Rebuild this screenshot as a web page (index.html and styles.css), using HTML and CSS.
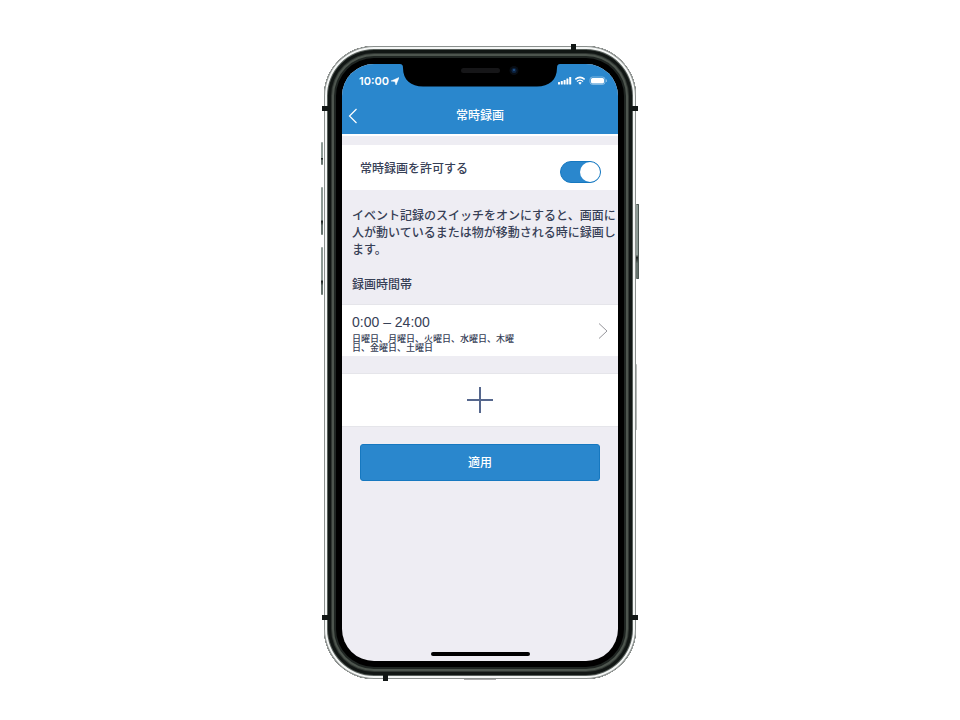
FILE: index.html
```html
<!doctype html>
<html lang="ja">
  <head>
    <meta charset="UTF-8" />
    <meta name="viewport" content="width=device-width, initial-scale=1.0" />
    <title>常時録画</title>
    <link rel="stylesheet" href="styles.css">
  </head>
  <body>
    <div class="phone">
      <i class="antenna antenna-top"></i>
      <i class="antenna antenna-bottom"></i>
      <i class="antenna antenna-left upper"></i>
      <i class="antenna antenna-left lower"></i>
      <i class="antenna antenna-right upper"></i>
      <i class="antenna antenna-right lower"></i>
      <i class="key key-mute"></i>
      <i class="key key-volume-up"></i>
      <i class="key key-volume-down"></i>
      <i class="key key-power"></i>
      <i class="key key-sim"></i>
      <i class="port"></i>

      <div class="screen">
        <svg class="notch" viewBox="0 0 160 23" aria-hidden="true">
          <path d="M0 0H160C158 0 157 1 157 4C157 16 149 22.500 137 22.500H23C11 22.500 3 16 3 4C3 1 2 0 0 0Z" fill="#000" />
          <rect x="61" y="4" width="39" height="5" rx="2.500" fill="#161618" />
          <circle cx="114" cy="6.500" r="4.500" fill="#080d14" />
          <circle cx="114" cy="6.500" r="2.500" fill="#0c2444" />
          <circle cx="114" cy="6" r="1" fill="#24558b" />
        </svg>

        <header class="header">
          <div class="status">
            <span class="clock">
              10:00
              <svg width="8" height="8" viewBox="0 0 8 8" aria-hidden="true">
                <path d="M8 .5L5 8L4 4.500L0 4Z" fill="#fff" stroke="#fff" stroke-width=".5" />
              </svg>
            </span>
            <svg width="49" height="9" viewBox="0 0 49 9" aria-hidden="true">
              <g fill="#fff">
                <rect x="0" y="6" width="2" height="2.500" rx=".5" />
                <rect x="2.800" y="5" width="2" height="3.500" rx=".5" />
                <rect x="5.600" y="4" width="2" height="4.500" rx=".5" />
                <rect x="8.400" y="2.500" width="2" height="6" rx=".5" />
                <rect x="11.200" y="1" width="2" height="7.500" rx=".5" />
                <path d="M20.300 6.800Q22 5.400 23.700 6.800L22 8.800Z" />
                <rect x="33" y="2" width="13" height="5.500" rx="1.500" />
              </g>
              <g fill="none" stroke="#fff">
                <path d="M17.300 3.400Q22-.6 26.700 3.400" stroke-width="1.500" />
                <path d="M18.900 5.500Q22 2.700 25.100 5.500" stroke-width="1.300" />
                <rect x="32" y="1" width="15" height="7.500" rx="2.500" opacity=".4" />
                <path d="M48.500 3.500V6" opacity=".4" />
              </g>
            </svg>
          </div>
          <nav class="navbar">
            <button class="back" type="button" aria-label="戻る">
              <svg width="10" height="16" viewBox="0 0 10 16" aria-hidden="true">
                <path d="M8.500 1L1.500 8L8.500 15" fill="none" stroke="#fff" stroke-width="1.200" />
              </svg>
            </button>
            <h1 class="title">常時録画</h1>
          </nav>
        </header>

        <main class="content">
          <div class="switch-row">
            <label for="always">常時録画を許可する</label>
            <input class="switch" id="always" type="checkbox" checked />
          </div>

          <p class="description">イベント記録のスイッチをオンにすると、画面に人が動いているまたは物が移動される時に録画します。</p>

          <h2 class="section-title">録画時間帯</h2>

          <button class="schedule" type="button">
            <span class="schedule-text">
              <span class="schedule-time">0:00 – 24:00</span>
              <span class="schedule-days">日曜日、月曜日、火曜日、水曜日、木曜<br />日、金曜日、土曜日</span>
            </span>
            <svg width="10" height="16" viewBox="0 0 10 16" aria-hidden="true">
              <path d="M1 .5L9 8L1 15.500" fill="none" stroke="#96969b" />
            </svg>
          </button>

          <button class="add" type="button" aria-label="追加">
            <svg width="26" height="26" viewBox="0 0 26 26" aria-hidden="true">
              <path d="M13 0V26M0 13H26" fill="none" stroke="#56678d" stroke-width="2" />
            </svg>
          </button>

          <button class="apply" type="button">適用</button>
        </main>

        <div class="home-bar"></div>
      </div>
    </div>
  </body>
</html>
```

FILE: styles.css
```css
* {
  box-sizing: border-box;
  padding: 0;
  margin: 0;
}

body {
  min-height: 100vh;
  padding: 46px 0 40px;
  background: #fff;
  color: #374056;
  font-family: Inter, "Noto Sans CJK JP", sans-serif;
  font-size: 12px;
  font-weight: 500;
}

button {
  border: 0;
  background: none;
  color: inherit;
  font: inherit;
  cursor: pointer;
}

svg {
  display: block;
  flex: none;
}

/* device */
.phone {
  position: relative;
  display: flex;
  width: 312px;
  max-width: 100%;
  min-height: 633px;
  margin: 0 auto;
  padding: 18px;
  border-radius: 50px;
  background: #000;
  box-shadow:
    inset 0 0 0 1px #8b908e,
    inset 0 0 0 3px #f4f6f5,
    inset 0 0 0 4px #59605c,
    inset 0 0 0 7px #111614,
    inset 0 0 0 8px #303632,
    inset 0 0 0 10px #4d554e,
    inset 0 0 0 12px #1f2522;
}

.antenna,
.key,
.port {
  position: absolute;
  background: #111615;
}

.antenna-top,
.antenna-bottom {
  width: 5px;
  height: 6px;
}

.antenna-top {
  top: -2px;
  right: 60px;
}

.antenna-bottom {
  bottom: -2px;
  left: 59px;
}

.antenna-left,
.antenna-right {
  width: 6px;
  height: 5px;
}

.antenna-left {
  left: -2px;
}

.antenna-right {
  right: -2px;
}

.upper {
  top: 60px;
}

.lower {
  bottom: 59px;
}

.key {
  left: -3px;
  width: 2px;
  border-radius: 1px;
  background: linear-gradient(#8d9a95 68%, #1b211f 72%, #65726d 80%);
}

.key-mute {
  top: 96px;
  height: 23px;
}

.key-volume-up {
  top: 141px;
  height: 48px;
}

.key-volume-down {
  top: 201px;
  height: 48px;
}

.key-power {
  top: 158px;
  right: -3px;
  left: auto;
  width: 3px;
  height: 75px;
  border: solid #4d5955;
  border-width: 1px 1px 1px 0;
}

.key-sim {
  top: 318px;
  right: -1px;
  left: auto;
  width: 1px;
  height: 66px;
  background: #b5b9b7;
}

.port {
  bottom: -1px;
  left: 140px;
  width: 32px;
  height: 1px;
  background: #aaa;
}

.screen {
  position: relative;
  display: flex;
  flex: 1;
  flex-direction: column;
  overflow: hidden;
  border-radius: 32px;
  background: #eeedf3;
}

.notch {
  position: absolute;
  top: 0;
  left: 50%;
  width: 160px;
  height: 23px;
  transform: translateX(-50%);
}

/* header */
.header {
  border-bottom: 2px solid #fff;
  background: #2a87cd;
  color: #fff;
}

.status {
  display: flex;
  align-items: center;
  justify-content: space-between;
  height: 33px;
  padding: 0 11px 0 17px;
}

.clock {
  display: flex;
  gap: 2px;
  align-items: center;
  font-size: 11px;
  font-weight: 600;
}

.navbar {
  display: grid;
  grid-template-columns: 24px 1fr 24px;
  align-items: center;
  height: 37px;
}

.back {
  padding: 4px 6px;
}

.title {
  font-size: 12px;
  font-weight: 500;
  line-height: 16px;
  text-align: center;
}

/* content */
.content {
  padding-top: 9px;
}

.switch-row {
  display: flex;
  align-items: center;
  justify-content: space-between;
  height: 45px;
  padding: 0 17px 0 18px;
  background: #fff;
}

.switch {
  width: 41px;
  height: 22px;
  margin-top: 8px;
  border: 1px solid #1678c0;
  border-radius: 11px;
  appearance: none;
  background: #2a87cd;
}

.switch::before {
  display: block;
  width: 20px;
  height: 20px;
  border-radius: 50%;
  background: #fff;
  content: "";
}

.switch:checked::before {
  margin-left: auto;
}

.description {
  padding: 17px 0 0 10px;
  line-height: 17px;
}

.section-title {
  padding: 18px 10px 11px;
  font-size: 12px;
  font-weight: 500;
  line-height: 17px;
}

.schedule {
  display: flex;
  align-items: center;
  justify-content: space-between;
  width: 100%;
  height: 52px;
  padding: 0 10px;
  border-top: 1px solid #e5e5ea;
  background: #fff;
  text-align: left;
}

.schedule-text {
  display: grid;
  gap: 4px;
  padding-top: 5px;
}

.schedule-time {
  font-family: "Liberation Sans", Arial, sans-serif;
  font-size: 14px;
  line-height: 16px;
}

.schedule-days {
  font-size: 9px;
  line-height: 9px;
}

.add {
  display: flex;
  align-items: center;
  justify-content: center;
  width: 100%;
  height: 54px;
  margin-top: 17px;
  border: solid #e5e5ea;
  border-width: 1px 0;
  background: #fff;
}

.apply {
  display: block;
  width: calc(100% - 36px);
  height: 37px;
  margin: 17px auto 0;
  border: 1px solid #1678c0;
  border-radius: 3px;
  background: #2a87cd;
  color: #fff;
  line-height: 33px;
}

.home-bar {
  width: 99px;
  height: 4px;
  margin: auto auto 5px;
  border-radius: 2px;
  background: #000;
}
```
